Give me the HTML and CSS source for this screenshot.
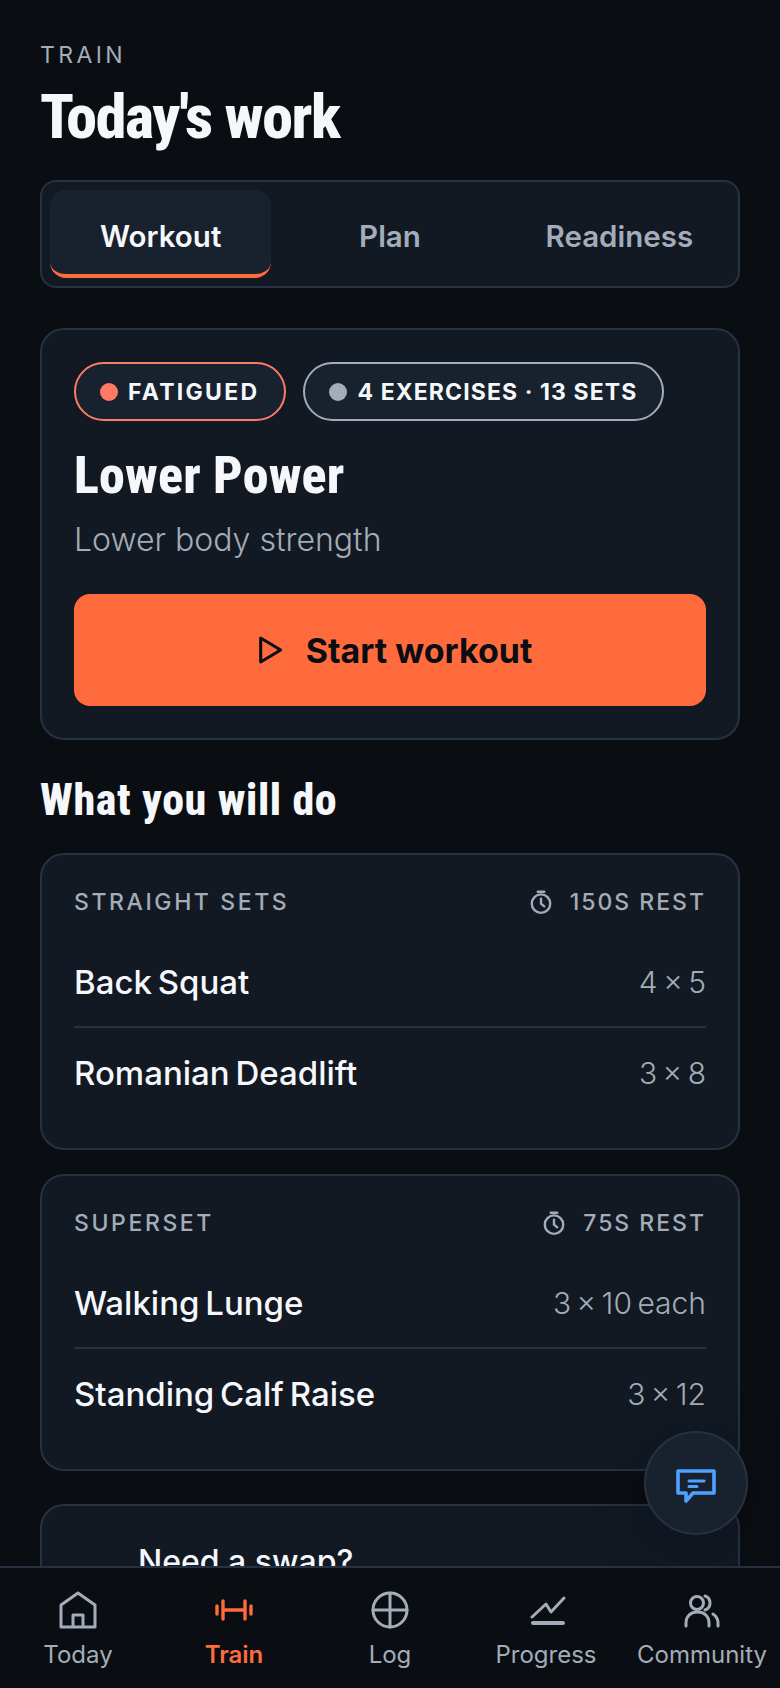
FILE: index.html
```html
<!DOCTYPE html>
<html lang="en">
<head>
  <meta charset="UTF-8">
  <meta name="viewport" content="width=device-width, initial-scale=1.0">
  <title>Train</title>
  <link rel="stylesheet" href="styles.css">
</head>
<body>
  <div class="app">
    <main class="content">
      <p class="eyebrow">TRAIN</p>
      <h1 class="page-title">Today's work</h1>

      <!-- Tabs -->
      <div class="tabs">
        <div class="tab active">Workout</div>
        <div class="tab">Plan</div>
        <div class="tab">Readiness</div>
      </div>

      <!-- Hero card -->
      <section class="card hero">
        <div class="pills">
          <span class="pill pill-coral"><i class="dot"></i>FATIGUED</span>
          <span class="pill pill-grey"><i class="dot"></i>4 EXERCISES · 13 SETS</span>
        </div>
        <h2 class="hero-title">Lower Power</h2>
        <p class="hero-sub">Lower body strength</p>
        <button class="start-btn">
          <svg width="32" height="32" viewBox="0 0 24 24" fill="none" stroke="currentColor" stroke-width="2.3" stroke-linejoin="round"><path d="M5 3l15 9-15 9z"/></svg>
          Start workout
        </button>
      </section>

      <h2 class="section-title">What you will do</h2>

      <section class="card block">
        <div class="block-head">
          <span class="block-label">STRAIGHT SETS</span>
          <span class="rest">
            <svg width="26" height="26" viewBox="0 0 24 24" fill="none" stroke="currentColor" stroke-width="2.2" stroke-linecap="round" stroke-linejoin="round"><circle cx="12" cy="13.5" r="8.5"/><path d="M9 2.5h6M12 9v4.5l3 2.5"/></svg>
            150S REST
          </span>
        </div>
        <div class="row"><span class="row-name">Back Squat</span><span class="row-val">4 × 5</span></div>
        <div class="row"><span class="row-name">Romanian Deadlift</span><span class="row-val">3 × 8</span></div>
      </section>

      <section class="card block">
        <div class="block-head">
          <span class="block-label">SUPERSET</span>
          <span class="rest">
            <svg width="26" height="26" viewBox="0 0 24 24" fill="none" stroke="currentColor" stroke-width="2.2" stroke-linecap="round" stroke-linejoin="round"><circle cx="12" cy="13.5" r="8.5"/><path d="M9 2.5h6M12 9v4.5l3 2.5"/></svg>
            75S REST
          </span>
        </div>
        <div class="row"><span class="row-name">Walking Lunge</span><span class="row-val">3 × 10 each</span></div>
        <div class="row"><span class="row-name">Standing Calf Raise</span><span class="row-val">3 × 12</span></div>
      </section>

      <section class="card swap">
        <span class="swap-title">Need a swap?</span>
      </section>
    </main>

    <!-- Chat button -->
    <button class="fab">
      <svg width="44" height="44" viewBox="0 0 44 44" fill="none" stroke="#4da3ff" stroke-width="3.6" stroke-linejoin="round" stroke-linecap="round"><path d="M4 10h36v22H19l-7 8v-8H4z"/><path d="M15 20h15M15 25.500h8" stroke-width="3"/></svg>
    </button>

    <!-- Bottom nav -->
    <nav class="bottom-nav">
      <div class="nav-item">
        <svg width="40" height="40" viewBox="0 0 40 40" fill="none" stroke="currentColor" stroke-width="3" stroke-linejoin="round" stroke-linecap="round"><path d="M3 37V15L20 3l17 12v22zM15 37V25h10v12"/></svg>
        <span>Today</span>
      </div>
      <div class="nav-item active">
        <svg width="40" height="40" viewBox="0 0 40 40" fill="none" stroke="currentColor" stroke-width="3.4" stroke-linecap="round"><path d="M3 16v8M9 11v18M31 11v18M37 16v8M9 20h22"/></svg>
        <span>Train</span>
      </div>
      <div class="nav-item">
        <svg width="40" height="40" viewBox="0 0 40 40" fill="none" stroke="currentColor" stroke-width="3" stroke-linecap="round"><circle cx="20" cy="20" r="17"/><path d="M20 3v34M3 20h34"/></svg>
        <span>Log</span>
      </div>
      <div class="nav-item">
        <svg width="40" height="40" viewBox="0 0 40 40" fill="none" stroke="currentColor" stroke-width="3" stroke-linecap="round" stroke-linejoin="round"><path d="M6 27l14-13 5 8L38 8"/><path d="M7 33h30" stroke-width="4"/></svg>
        <span>Progress</span>
      </div>
      <div class="nav-item">
        <svg width="40" height="40" viewBox="0 0 40 40" fill="none" stroke="currentColor" stroke-width="3" stroke-linecap="round"><circle cx="15" cy="13" r="6.500"/><path d="M4 36v-3c0-7 5-11 11.500-11S27 26 27 33v3"/><path d="M23 6c3 1 5 4 5 7s-2 6-5 7M31 24c3 2 5 5 5 9v3"/></svg>
        <span>Community</span>
      </div>
    </nav>
  </div>
</body>
</html>
```

FILE: styles.css
```css
* {
  box-sizing: border-box;
}

body {
  margin: 0;
  background: #0a0d12;
  color: #f5f7fb;
  font-family: Inter, "Noto Sans", Arial, sans-serif;
}

.app {
  position: relative;
  height: 1688px;
  display: flex;
  flex-direction: column;
  overflow: hidden;
}

.content {
  flex: 1;
  min-height: 0;
  overflow: hidden;
  padding: 42px 40px 0;
}

.eyebrow {
  margin: 0;
  font-size: 23px;
  line-height: 27px;
  letter-spacing: 3.400px;
  color: #a3adb9;
}

/* Headings */
.page-title,
.hero-title,
.section-title {
  margin: 0;
  font-family: Roboto, sans-serif;
  font-stretch: 75%;
  font-weight: 800;
}

.page-title {
  font-size: 62px;
  line-height: 80px;
  letter-spacing: -1.400px;
  margin-top: 8px;
}

.hero-title {
  font-size: 52px;
  line-height: 64px;
  letter-spacing: 0.200px;
  margin-top: 23px;
}

.section-title {
  font-size: 44px;
  line-height: 56px;
  letter-spacing: 0.600px;
  margin-top: 32px;
}

/* Tabs */
.tabs {
  display: flex;
  gap: 8px;
  margin-top: 23px;
  height: 108px;
  padding: 8px;
  background: #121923;
  border: 2px solid #263241;
  border-radius: 16px;
}

.tab {
  flex: 1;
  display: flex;
  align-items: center;
  justify-content: center;
  padding-top: 4px;
  font-size: 29.500px;
  font-weight: 600;
  color: #a3adb9;
}

.tab.active {
  color: #f5f7fb;
  background: #18222e;
  border-radius: 16px;
  border-bottom: 4px solid #ff6b3d;
  padding-top: 8px;
}

/* Cards */
.card {
  background: #121923;
  border: 2px solid #263241;
  border-radius: 24px;
}

.hero {
  margin-top: 40px;
  padding: 32px;
}

.pills {
  display: flex;
  gap: 17px;
}

.pill {
  display: flex;
  align-items: center;
  gap: 10px;
  height: 59px;
  padding: 0 25px 0 24px;
  background: #18222e;
  border: 2px solid;
  border-radius: 30px;
  font-size: 23px;
  font-weight: 700;
}

.dot {
  width: 18px;
  height: 18px;
  border-radius: 50%;
}

.pill-coral {
  border-color: #ff7a66;
  letter-spacing: 2.300px;
}

.pill-coral .dot {
  background: #ff7a66;
}

.pill-grey {
  border-color: #a3adb9;
  letter-spacing: 1.100px;
}

.pill-grey .dot {
  background: #a3adb9;
}

.hero-sub {
  margin: 10px 0 0;
  font-size: 32px;
  line-height: 44px;
  font-weight: 300;
  color: #a3adb9;
}

.start-btn {
  display: flex;
  align-items: center;
  justify-content: center;
  gap: 20px;
  width: 100%;
  height: 112px;
  margin-top: 32px;
  padding: 0 0 0 6px;
  background: #ff6b3d;
  border: none;
  border-radius: 16px;
  color: #0a0d12;
  font-family: inherit;
  font-size: 34px;
  font-weight: 700;
}

/* Exercise blocks */
.block {
  margin-top: 24px;
  height: 297px;
  padding: 32px 32px 0;
}

.section-title + .block {
  margin-top: 25px;
}

.block-head {
  display: flex;
  justify-content: space-between;
  align-items: center;
  height: 30px;
  margin-bottom: 21px;
  font-size: 23px;
  font-weight: 500;
  letter-spacing: 2px;
  color: #a3adb9;
}

.block-label {
  letter-spacing: 2.600px;
}

.rest {
  display: flex;
  align-items: center;
  gap: 16px;
}

.row {
  display: flex;
  justify-content: space-between;
  align-items: center;
  height: 90px;
}

.block-head + .row {
  border-bottom: 2px solid #263241;
}

.row-name {
  font-size: 33px;
  font-weight: 500;
  word-spacing: -3px;
}

.row-val {
  font-size: 30px;
  font-weight: 300;
  word-spacing: -3px;
  color: #a3adb9;
}

.swap {
  margin-top: 33px;
  height: 200px;
  padding: 36px 0 0 96px;
}

.swap-title {
  font-size: 32px;
  font-weight: 500;
}

/* Chat button */
.fab {
  position: absolute;
  left: 644px;
  top: 1431px;
  width: 104px;
  height: 104px;
  display: flex;
  align-items: center;
  justify-content: center;
  padding: 0;
  background: #18222e;
  border: 2px solid #263241;
  border-radius: 50%;
  box-shadow: 0 10px 60px rgba(0, 0, 0, 0.25);
}

/* Bottom nav */
.bottom-nav {
  flex: none;
  display: flex;
  height: 122px;
  background: #0a0d12;
  border-top: 2px solid #263241;
  padding: 22px 0 0;
}

.nav-item {
  flex: 1;
  display: flex;
  flex-direction: column;
  align-items: center;
  gap: 10px;
  font-size: 24px;
  color: #a3adb9;
}

.nav-item.active {
  color: #ff6b3d;
  font-weight: 600;
}
```
